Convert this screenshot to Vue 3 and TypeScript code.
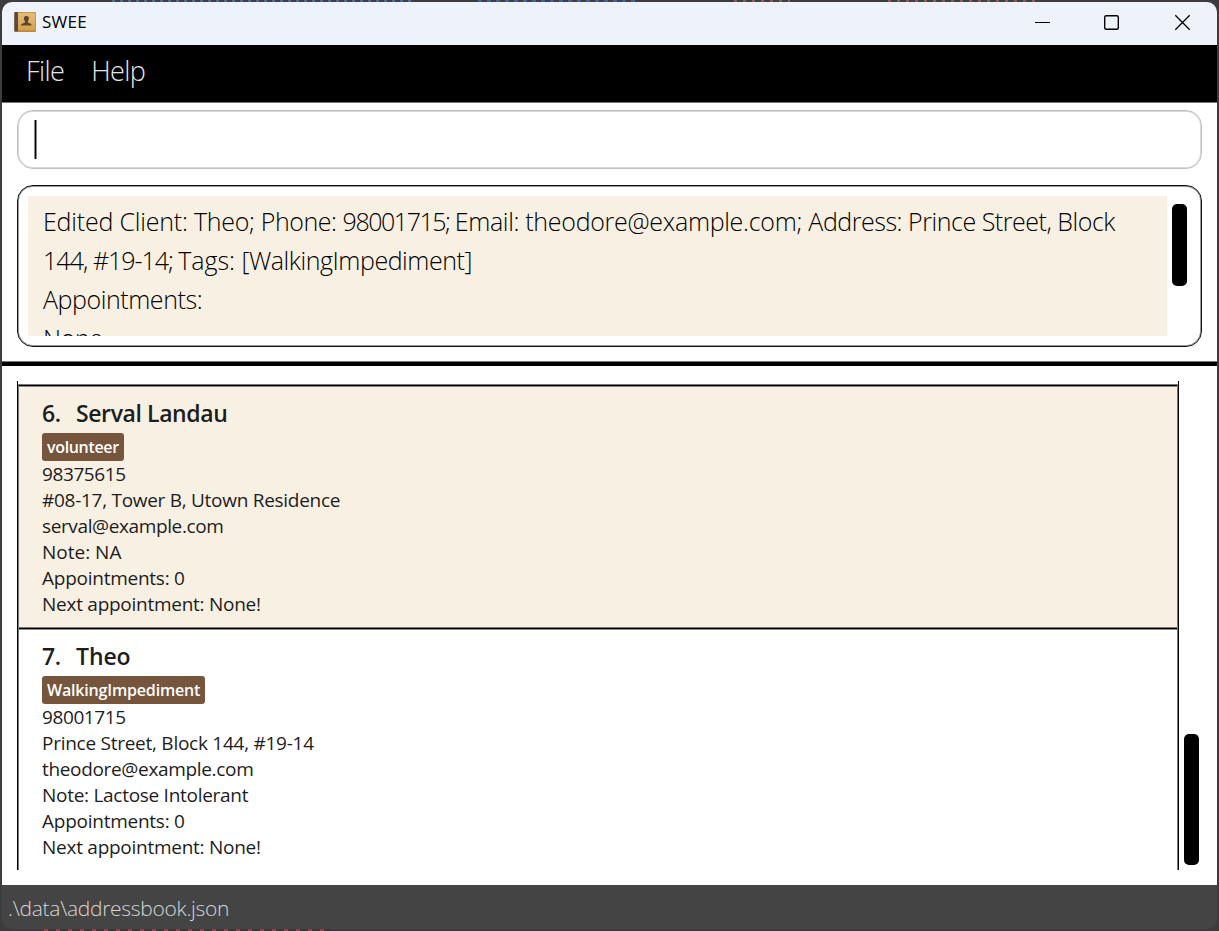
<script setup lang="ts">
interface Run { text: string; ls: number }
interface Client { id: number; name: string; nameLs: number; tag: string; tagLs: number; lines: Run[] }

const clients: Client[] = [
  {
    id: 6, name: 'Serval Landau', nameLs: -0.4, tag: 'volunteer', tagLs: -0.33,
    lines: [
      { text: '98375615', ls: -0.4 },
      { text: '#08-17, Tower B, Utown Residence', ls: -0.28 },
      { text: 'serval@example.com', ls: -0.38 },
      { text: 'Note: NA', ls: 0 },
      { text: 'Appointments: 0', ls: -0.25 },
      { text: 'Next appointment: None!', ls: -0.26 },
    ],
  },
  {
    id: 7, name: 'Theo', nameLs: -0.1, tag: 'WalkingImpediment', tagLs: -0.18,
    lines: [
      { text: '98001715', ls: -0.4 },
      { text: 'Prince Street, Block 144, #19-14', ls: -0.26 },
      { text: 'theodore@example.com', ls: -0.33 },
      { text: 'Note: Lactose Intolerant', ls: -0.28 },
      { text: 'Appointments: 0', ls: -0.25 },
      { text: 'Next appointment: None!', ls: -0.26 },
    ],
  },
]

const feedback: Run[][] = [
  [
    { text: 'Edited Client: ', ls: -0.2 },
    { text: 'Theo; ', ls: -0.3 },
    { text: 'Phone: ', ls: -0.47 },
    { text: '98001715; ', ls: -1.45 },
    { text: 'Email: ', ls: -0.33 },
    { text: 'theodore@example.com; ', ls: -0.29 },
    { text: 'Address: Prince Street, Block', ls: -0.47 },
  ],
  [
    { text: '144, ', ls: -0.95 },
    { text: '#19-14; ', ls: -1.05 },
    { text: 'Tags: ', ls: -0.05 },
    { text: '[WalkingImpediment]', ls: -0.45 },
  ],
  [{ text: 'Appointments:', ls: -0.43 }],
  [{ text: 'None', ls: -0.4 }],
]
</script>

<template>
  <div class="desktop">
    <div class="window">
      <header class="titlebar">
        <svg class="book" width="24" height="24" viewBox="0 0 24 24">
          <defs>
            <linearGradient id="cover" x1="0" y1="0" x2="0" y2="1">
              <stop offset="0" stop-color="#e6bd78" />
              <stop offset="1" stop-color="#d79f4b" />
            </linearGradient>
          </defs>
          <rect x="0.300" y="2" width="21.700" height="20" rx="1" fill="#b98a45" />
          <rect x="4" y="2.800" width="17.300" height="17.500" fill="url(#cover)" />
          <rect x="0.300" y="2" width="3.700" height="19.500" rx="1" fill="#5d4a40" />
          <path d="M12.400 6c-1.800 0-2.600 1.200-2.500 2.800.1 1 .6 1.700 1 2.200v1.400c-.9.7-3.800.8-3.900 3.200h10.800c-.1-2.400-3-2.500-3.900-3.200V11c.4-.5.9-1.200 1-2.200C15 7.200 14.200 6 12.400 6z" fill="#59462d" />
        </svg>
        <span class="title">SWEE</span>
        <span class="spacer"></span>
        <svg class="controls" width="176" height="20" viewBox="0 0 176 20" fill="none" stroke="#000">
          <path d="M5 10.500H20" />
          <rect x="74.700" y="3.700" width="13.600" height="13.600" rx="1.500" stroke-width="1.400" />
          <path d="M145.300 3.300l14.400 14.400M159.700 3.300l-14.400 14.400" stroke-width="1.300" />
        </svg>
      </header>
      <nav class="menu"><span>File</span><span>Help</span></nav>
      <section class="command"><div class="field"><i class="caret"></i></div></section>
      <section class="result">
        <div class="result-box">
          <div class="result-text">
            <p v-for="(line, i) in feedback" :key="i"><span v-for="r in line" :key="r.text" :style="{ letterSpacing: r.ls + 'px' }">{{ r.text }}</span></p>
          </div>
          <i class="thumb-top"></i>
        </div>
      </section>
      <main class="panel">
        <div class="list">
          <article v-for="c in clients" :key="c.id" class="card">
            <h2><span class="num">{{ c.id }}.</span><span :style="{ letterSpacing: c.nameLs + 'px' }">{{ c.name }}</span></h2>
            <span class="tag" :style="{ letterSpacing: c.tagLs + 'px' }">{{ c.tag }}</span>
            <p v-for="l in c.lines" :key="l.text" :style="{ letterSpacing: l.ls + 'px' }">{{ l.text }}</p>
          </article>
        </div>
        <i class="thumb-list"></i>
      </main>
      <footer class="status">.\data\addressbook.json</footer>
    </div>
  </div>
</template>

<style>
body { margin: 0; overflow: hidden; }
</style>
<style scoped>
* { box-sizing: border-box; }
.desktop {
  width: 1219px; height: 931px; padding: 2px; overflow: hidden;
  font-family: "Open Sans", "Noto Sans", sans-serif;
  background-color: #3c3c3e;
  background-repeat: no-repeat;
  background-image:
    repeating-linear-gradient(90deg, #506a96 0 3px, #3f4042 3px 8px),
    repeating-linear-gradient(90deg, #45609b 0 4px, #3f4042 4px 9px),
    repeating-linear-gradient(90deg, #8c5a58 0 3px, #3f4042 3px 9px),
    repeating-linear-gradient(90deg, #8c5a58 0 3px, #3f4042 3px 9px),
    repeating-linear-gradient(90deg, #8e4448 0 4px, #38383a 4px 12px);
  background-position: 112px 0, 478px 0, 734px 0, 888px 0, 44px 929px;
  background-size: 302px 2px, 158px 2px, 56px 2px, 152px 2px, 286px 2px;
}
.window { height: 927px; border-radius: 10px; overflow: hidden; background: #444; display: flex; flex-direction: column; }
.titlebar { height: 43px; flex: none; display: flex; align-items: center; background: linear-gradient(90deg, #eef3fb, #edf3f8); padding: 0 12px; }
.book { display: block; margin-top: -3px; }
.title { font-size: 17px; color: #000; margin-left: 4px; line-height: 20px; margin-top: -3px; letter-spacing: 0.3px; }
.spacer { flex: 1; }
.controls { margin-top: -3px; margin-right: -1px; }
.menu { height: 58px; flex: none; background: #000; border-bottom: 1px solid #777; color: #e6e6e6; font-weight: 300; font-size: 27px; letter-spacing: -0.6px; line-height: 51px; padding-left: 24px; display: flex; gap: 27px; }
.command { padding: 7px 15px 0; height: 74px; flex: none; background: #fff; }
.field { height: 59px; border: 1px solid #bebebe; box-shadow: inset 0 0 0 1px #d9d9d9; border-radius: 16px; padding: 9px 0 0 17px; }
.caret { display: block; width: 1px; height: 39px; background: #000; box-shadow: -1px 0 #888, 1px 0 #888; }
.result { height: 184px; flex: none; padding: 8px 15px 0; background: #fff; }
.result-box { height: 162px; border: 1px solid #111; box-shadow: inset 0 0 0 1px #999; border-radius: 16px; padding: 10px 14px 10px 10px; display: flex; justify-content: space-between; }
.result-text { width: 1139px; height: 140px; overflow: hidden; background: #f8f0e3; padding: 6px 15px 0; font-size: 25px; font-weight: 300; color: #000; }
.result-text p { margin: 0; line-height: 39px; white-space: pre; }
.thumb-top { width: 15px; height: 82px; border-radius: 5px; background: #000; margin-top: 7.500px; }
.panel { height: 523px; flex: none; border-top: 4px solid #000; box-shadow: 0 -1px #777; margin-top: 1px; padding: 15px 18px 0 15px; display: flex; gap: 5px; background: #fff; }
.list { width: 1162px; height: 489px; border: solid #000; border-width: 0 1px; padding-top: 4px; overflow: hidden; }
.card { height: 243px; border: solid #777; border-width: 0 1px; padding: 13px 24px 0 23px; color: #1d1d1d; box-shadow: inset 0 1px #000, inset 0 2px #888, 0 -1px #777; }
.card:first-child { background: #f8f0e3; }
.card h2 { margin: 0; font-size: 23px; line-height: 30px; font-weight: 600; display: flex; }
.num { width: 34px; letter-spacing: -0.300px; }
.tag { display: block; width: fit-content; height: 28px; line-height: 28px; margin-top: 5px; border-radius: 3px; background: #75553c; color: #fff; font-size: 16px; font-weight: 600; padding: 0 5px; }
.card p { margin: 0; font-size: 19px; line-height: 26px; white-space: nowrap; }
.thumb-list { width: 15px; height: 131px; border-radius: 5px; background: #000; margin-top: 353px; }
.status { flex: 1; background: #444; color: #d6d6d6; font-size: 21px; font-weight: 300; letter-spacing: -0.300px; line-height: 46px; padding-left: 6px; }
</style>
